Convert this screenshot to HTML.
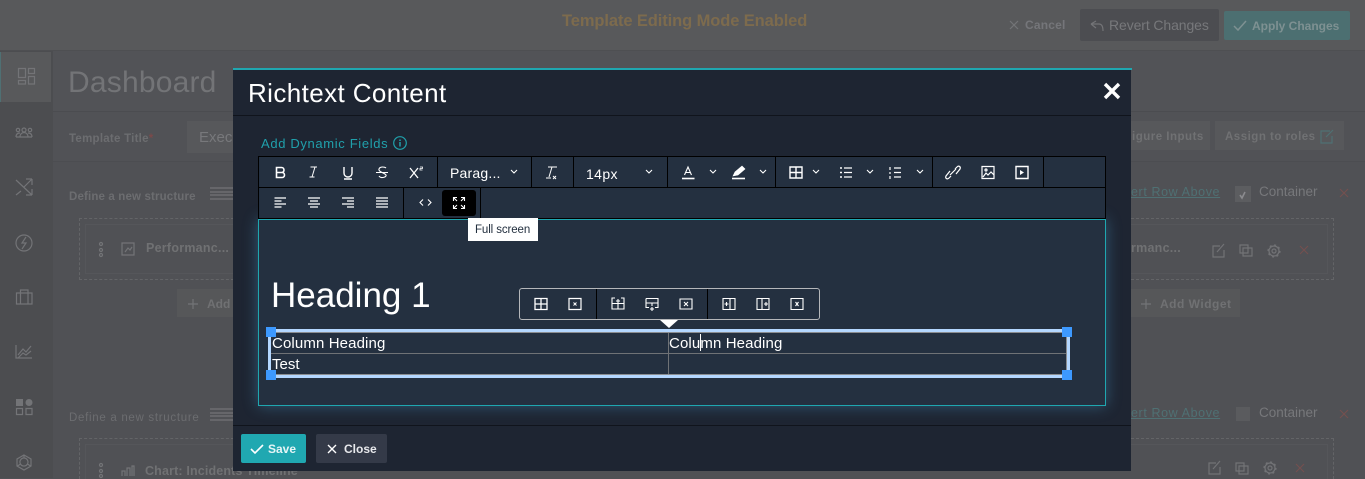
<!DOCTYPE html>
<html><head><meta charset="utf-8">
<style>
html,body{margin:0;padding:0;width:1365px;height:478px;overflow:hidden;background:#505155;font-family:"Liberation Sans",sans-serif}
.a{position:absolute}
.t{position:absolute;white-space:nowrap;line-height:1}
.bg{color:#707173;font-weight:bold;font-size:11.5px}
svg{position:absolute;left:0;top:0;overflow:visible}
</style></head><body>
<!-- dim page -->
<div class="a" style="left:0;top:0;width:1365px;height:50px;background:#58595b"></div>
<div class="a" style="left:0;top:50px;width:1365px;height:1px;background:#4e4f52"></div>
<div class="a" style="left:0;top:51px;width:53px;height:427px;background:#4c4d50"></div>
<div class="a" style="left:0;top:52px;width:50px;height:50px;background:#58595b;border-left:1px solid #4f7073"></div>
<div class="a" style="left:53px;top:51px;width:1312px;height:60px;background:#525357"></div>
<div class="a" style="left:53px;top:111px;width:1312px;height:1px;background:#4b4c50"></div>
<div class="a" style="left:53px;top:112px;width:1312px;height:50px;background:#515256"></div>
<div class="a" style="left:53px;top:161px;width:1312px;height:1px;background:#4c4d51"></div>
<div class="t" style="left:562px;top:13px;font-size:16.5px;font-weight:bold;color:#7d6b4d;letter-spacing:-.1px">Template Editing Mode Enabled</div>
<div class="t" style="left:1025px;top:19px;font-size:12px;font-weight:bold;color:#75767a;letter-spacing:.2px">Cancel</div>
<div class="a" style="left:1080px;top:9px;width:139px;height:32px;background:#4c4d51;border-radius:2px"></div>
<div class="t" style="left:1109px;top:18px;font-size:14px;color:#77787b;letter-spacing:-.1px">Revert Changes</div>
<div class="a" style="left:1224px;top:11px;width:126px;height:29px;background:#4c6f71;border-radius:2px"></div>
<div class="t" style="left:1252px;top:20px;font-size:12px;font-weight:bold;color:#7e9192">Apply Changes</div>
<div class="t" style="left:68px;top:68px;font-size:30px;color:#737477;letter-spacing:.2px">Dashboard</div>
<div class="t bg" style="left:69px;top:134px;color:#6c6d70;letter-spacing:.25px">Template Title<span style="color:#7a4a4a">*</span></div>
<div class="a" style="left:187px;top:121px;width:46px;height:32px;background:#57585b"></div>
<div class="t" style="left:199px;top:130px;font-size:15px;color:#77787b">Executive</div>
<div class="a" style="left:1131px;top:121px;width:79px;height:29px;background:#57585b"></div>
<div class="a" style="left:1215px;top:121px;width:129px;height:29px;background:#57585b"></div>
<div class="t bg" style="left:1132px;top:132px;letter-spacing:.5px">igure Inputs</div>
<div class="t bg" style="left:1225px;top:132px;letter-spacing:.5px">Assign to roles</div>
<div class="t bg" style="left:69px;top:192px;color:#6c6d70;letter-spacing:.15px">Define a new structure</div>
<div class="t bg" style="left:69px;top:413px;color:#6c6d70;font-weight:normal;letter-spacing:.7px">Define a new structure</div>
<div class="t" style="left:1131px;top:186px;font-size:12.5px;color:#4f7073;text-decoration:underline;letter-spacing:.6px">ert Row Above</div>
<div class="t" style="left:1131px;top:407px;font-size:12.5px;color:#4f7073;text-decoration:underline;letter-spacing:.6px">ert Row Above</div>
<div class="a" style="left:1235px;top:186px;width:16px;height:16px;background:#5c5d60"></div>
<div class="a" style="left:1236px;top:407px;width:14px;height:14px;background:#5a5b5e"></div>
<div class="t" style="left:1259px;top:185px;font-size:13.5px;color:#77787b">Container</div>
<div class="t" style="left:1259px;top:406px;font-size:13.5px;color:#77787b">Container</div>
<div class="a" style="left:79px;top:218px;width:154px;height:60px;border:1px dashed #636467;border-right:0"></div>
<div class="a" style="left:1131px;top:218px;width:202px;height:60px;border:1px dashed #636467;border-left:0"></div>
<div class="a" style="left:85px;top:224px;width:148px;height:48px;border:1px solid #55565a;border-right:0"></div>
<div class="a" style="left:1131px;top:224px;width:196px;height:48px;border:1px solid #55565a;border-left:0"></div>
<div class="a" style="left:79px;top:438px;width:154px;height:40px;border:1px dashed #636467;border-right:0;border-bottom:0"></div>
<div class="a" style="left:1131px;top:438px;width:202px;height:40px;border:1px dashed #636467;border-left:0;border-bottom:0"></div>
<div class="a" style="left:85px;top:444px;width:148px;height:34px;border:1px solid #55565a;border-right:0;border-bottom:0"></div>
<div class="a" style="left:1131px;top:444px;width:196px;height:34px;border:1px solid #55565a;border-left:0;border-bottom:0"></div>
<div class="t bg" style="left:146px;top:242px;font-size:12.5px;letter-spacing:.25px">Performanc...</div>
<div class="t bg" style="left:1131px;top:242px;font-size:12.5px;letter-spacing:.25px">rmanc...</div>
<div class="t" style="left:145px;top:465px;font-size:12.5px;font-weight:bold;color:#707173;letter-spacing:.15px">Chart: Incidents Timeline</div>
<div class="a" style="left:177px;top:289px;width:56px;height:28px;background:#565759"></div>
<div class="a" style="left:1131px;top:289px;width:109px;height:28px;background:#565759"></div>
<div class="t bg" style="left:207px;top:298px;font-size:12px">Add</div>
<div class="t bg" style="left:1160px;top:298px;font-size:12px;letter-spacing:.5px">Add Widget</div>

<svg width="1365" height="478" fill="none" stroke="#737477" stroke-width="1.2">
<!-- sidebar -->
<path d="M18.500 68.500h7v9h-7zM28.500 68.500h6v5h-6zM18.500 80.500h7v3.500h-7zM28.500 76.500h6v7.500h-6z"/>
<circle cx="24" cy="130" r="2"/><circle cx="30" cy="130" r="1.700"/><circle cx="18" cy="130" r="1.700"/><path d="M16 137c0-4 3-4 4-4M32 137c0-4-3-4-4-4M20 137c0-6 8-6 8 0M16 137h16"/>
<path d="M16 180l16 15M32 179v6M32 179h-6M32 179l-8 8M21 191l-5 4M32 195v-6M32 195h-6"/>
<circle cx="24" cy="243" r="8"/><path d="M26 237l-4 6h4l-4 6"/>
<path d="M16.500 293h15.500v11H16.500zM20.500 293v11M28 293v11M20.500 293v-3h7.500v3"/>
<path d="M16 345v13h16M18 355l5-6 3 3 5-6M18 358l5-5 3 2 5-4"/>
<path d="M16.500 408.500h6v6h-6zM26 408.500h6v6h-6z"/><rect x="16" y="399" width="7" height="7" fill="#737477" stroke="none"/><circle cx="29" cy="402.500" r="3.500" fill="#737477" stroke="none"/>
<path d="M24 455l7 4v7l-7 4-7-4v-7zM24 458a4 4 0 1 1-.1 0M24 455v3M17.500 466l3-2M30.500 466l-3-2"/>
<!-- lines -->
<path d="M210 188h23M210 192h23M210 195h23M210 199h23M210 409h23M210 413h23M210 416h23M210 420h23"/>
<circle cx="101" cy="244" r="1.500"/><circle cx="101" cy="250" r="1.500"/><circle cx="101" cy="255" r="1.500"/>
<circle cx="101" cy="465" r="1.500"/><circle cx="101" cy="471" r="1.500"/><circle cx="101" cy="476" r="1.500"/>
<path d="M122 243h12v12h-12zM125 252l3-4 2 2 2-3"/>
<path d="M122 476v-5h3v5M127 476v-8h3v8M132 476v-10h2v10"/>
<path d="M188 304h10M193 299v10"/><path d="M1141 304h10M1146 299v10"/>
<path d="M1010 21l8 8M1018 21l-8 8"/>
<path d="M1091 24h8c3 0 4 3 4 7M1091 24l5-3M1091 24l5 4"/>
<path d="M1234 26l4 4 8-9" stroke="#7e9192" stroke-width="1.500"/>
<path d="M1330 131h-9v12h11v-7M1333 130l-7 7" stroke="#4f7073"/>
<path d="M1240 195l2 3 3-6" stroke="#8a8b8e" stroke-width="1.600"/>
<path d="M1220 246h-7v11h11v-7M1217 252l7-8" stroke="#727376"/>
<path d="M1240 245h8v8h-8zM1243 248h9v8h-9z" stroke="#727376"/>
<circle cx="1274" cy="251" r="5" stroke="#727376"/><circle cx="1274" cy="251" r="6" stroke="#727376" stroke-dasharray="2 2.700"/><circle cx="1274" cy="251" r="2" stroke="#727376"/>
<path d="M1300 246l8 8M1308 246l-8 8" stroke="#74504f"/>
<path d="M1216 463h-7v11h11v-7M1213 469l7-8" stroke="#727376"/>
<path d="M1236 463h8v8h-8zM1239 466h9v8h-9z" stroke="#727376"/>
<circle cx="1270" cy="468" r="5" stroke="#727376"/><circle cx="1270" cy="468" r="6" stroke="#727376" stroke-dasharray="2 2.700"/><circle cx="1270" cy="468" r="2" stroke="#727376"/>
<path d="M1296 464l8 8M1304 464l-8 8" stroke="#74504f"/>
<path d="M1340 189l8 8M1348 189l-8 8M1340 410l8 8M1348 410l-8 8" stroke="#74504f"/>
</svg>

<!-- modal -->
<div class="a" style="left:233px;top:70px;width:898px;height:401px;background:#1e2532"></div>
<div class="a" style="left:233px;top:68px;width:899px;height:2px;background:#1fa7b0"></div>
<div class="a" style="left:233px;top:115px;width:898px;height:1px;background:#10141c"></div>
<div class="a" style="left:233px;top:425px;width:898px;height:1px;background:#10141c"></div>
<div class="t" style="left:248px;top:80px;font-size:26px;color:#fff;letter-spacing:.4px">Richtext Content</div>
<div class="t" style="left:261px;top:137px;font-size:13px;color:#20a0ab;letter-spacing:.65px">Add Dynamic Fields</div>
<!-- editor -->
<div class="a" style="left:258px;top:219px;width:846px;height:185px;background:#243040;border:1px solid #1fa7b0;box-shadow:0 0 14px rgba(80,170,220,.4)"></div>
<!-- toolbar -->
<div class="a" style="left:258px;top:156px;width:846px;height:61px;background:#243040;border:1px solid #000"></div>
<div class="a" style="left:258px;top:218px;width:848px;height:1px;background:#000"></div>
<div class="a" style="left:259px;top:187px;width:846px;height:1px;background:#000"></div>
<div class="a" style="left:437px;top:157px;width:1px;height:30px;background:#000"></div>
<div class="a" style="left:531px;top:157px;width:1px;height:30px;background:#000"></div>
<div class="a" style="left:573px;top:157px;width:1px;height:30px;background:#000"></div>
<div class="a" style="left:667px;top:157px;width:1px;height:30px;background:#000"></div>
<div class="a" style="left:775px;top:157px;width:1px;height:30px;background:#000"></div>
<div class="a" style="left:932px;top:157px;width:1px;height:30px;background:#000"></div>
<div class="a" style="left:1043px;top:157px;width:1px;height:30px;background:#000"></div>
<div class="a" style="left:403px;top:188px;width:1px;height:30px;background:#000"></div>
<div class="a" style="left:480px;top:188px;width:1px;height:30px;background:#000"></div>
<div class="a" style="left:442px;top:190px;width:34px;height:26px;background:#000;border-radius:3px"></div>
<div class="t" style="left:450px;top:166px;font-size:14px;color:#fff;letter-spacing:.2px">Parag...</div>
<div class="t" style="left:586px;top:167px;font-size:14px;color:#fff;letter-spacing:.4px">14px</div>
<div class="t" style="left:271px;top:278px;font-size:35px;color:#fff">Heading 1</div>
<!-- table -->
<div class="a" style="left:271px;top:332px;width:796px;height:1px;background:#8b8d90"></div>
<div class="a" style="left:271px;top:353px;width:796px;height:1px;background:#6f7276"></div>
<div class="a" style="left:271px;top:374px;width:796px;height:1px;background:#8b8d90"></div>
<div class="a" style="left:668px;top:333px;width:1px;height:41px;background:#6f7276"></div>
<div class="a" style="left:268px;top:329px;width:802px;height:3px;background:#b4d7ff"></div>
<div class="a" style="left:268px;top:375px;width:802px;height:3px;background:#b4d7ff"></div>
<div class="a" style="left:268px;top:329px;width:3px;height:49px;background:#b4d7ff"></div>
<div class="a" style="left:1066px;top:332px;width:1px;height:43px;background:#8b8d90"></div>
<div class="a" style="left:1067px;top:329px;width:3px;height:49px;background:#b4d7ff"></div>
<div class="a" style="left:266px;top:327px;width:10px;height:10px;background:#3d99ff"></div>
<div class="a" style="left:1062px;top:327px;width:10px;height:10px;background:#3d99ff"></div>
<div class="a" style="left:266px;top:370px;width:10px;height:10px;background:#3d99ff"></div>
<div class="a" style="left:1062px;top:370px;width:10px;height:10px;background:#3d99ff"></div>
<div class="t" style="left:272px;top:336px;font-size:15px;color:#fff;letter-spacing:.12px">Column Heading</div>
<div class="t" style="left:669px;top:336px;font-size:15px;color:#fff;letter-spacing:.12px">Column Heading</div>
<div class="t" style="left:272px;top:357px;font-size:15px;color:#fff">Test</div>
<div class="a" style="left:700px;top:334px;width:1px;height:17px;background:#fff"></div>
<!-- table toolbar -->
<div class="a" style="left:519px;top:288px;width:299px;height:30px;background:#243040;border:1px solid #b5b7ba;border-radius:3px"></div>
<div class="a" style="left:596px;top:289px;width:1px;height:30px;background:#000"></div>
<div class="a" style="left:707px;top:289px;width:1px;height:30px;background:#000"></div>
<div class="a" style="left:660px;top:320px;width:0;height:0;border-left:9px solid transparent;border-right:9px solid transparent;border-top:8px solid #fff"></div>
<!-- tooltip -->
<div class="a" style="left:468px;top:218px;width:70px;height:23px;background:#fff"></div>
<div class="t" style="left:475px;top:225px;font-size:11.5px;color:#222f3e;letter-spacing:-.1px">Full screen</div>
<!-- footer -->
<div class="a" style="left:241px;top:434px;width:65px;height:29px;background:#20a8b1;border-radius:2px"></div>
<div class="t" style="left:268px;top:443px;font-size:12px;font-weight:bold;color:#e6f5f6">Save</div>
<div class="a" style="left:316px;top:434px;width:71px;height:29px;background:#343a48;border-radius:2px"></div>
<div class="t" style="left:344px;top:443px;font-size:12px;font-weight:bold;color:#e8e9ec">Close</div>

<svg width="1365" height="478" fill="none" stroke="#fff" stroke-width="1.2">
<!-- modal close -->
<path d="M1105 84l14 14M1119 84l-14 14" stroke-width="3.400"/>
<circle cx="400" cy="143" r="6.300" stroke="#20a0ab"/><path d="M400 142v4.500M400 139.500v1.500" stroke="#20a0ab" stroke-width="1.500"/>
<!-- save/close icons -->
<path d="M251 449l4 4 8-8" stroke-width="1.600"/>
<path d="M328 445l8 8M336 445l-8 8" stroke-width="1.400"/>
<!-- row 1 -->
<path d="M276.500 167.500h5a2.500 2.500 0 0 1 0 5h-5zM276.500 172.500h5.500a2.500 2.500 0 0 1 0 5h-5.500z" stroke-width="1.600"/>
<path d="M312 177l3-10M310.500 167h6.500M309.500 177h5" stroke-width="1"/>
<path d="M344 167v6a4 4 0 0 0 8 0v-6M344 179h8" stroke-width="1.400"/>
<path d="M376 172.500h12M386 168c-1-1-6-2-7 1s6 4 7 6-5 4-7 1" stroke-width="1.100"/>
<path d="M410 168l8 10M418 168l-8 10" stroke-width="1.300"/><path d="M420 167h2.500v1.500h-2.500v1.500h2.500" stroke-width=".8"/>
<path d="M548 167h9M552 167l-3 10M546 178h5M553 176l3 3M556 176l-3 3" stroke-width="1"/>
<path d="M682 178.500h12.500" stroke-width="1.600"/><path d="M684.500 175l3.500-8 3.500 8M685.500 172.500h5" stroke-width="1.100"/>
<path d="M732 178.500h13" stroke-width="1.600"/><path d="M733 176l2-4 7-6 3 3-7 6z" fill="#fff" stroke-width=".6"/>
<path d="M790 167h12v11h-12zM790 172.500h12M796 167v11" stroke-width="1.400"/>
<path d="M840 168h2M840 172.500h2M840 177h2" stroke-width="1.600"/><path d="M844 168h8M844 172.500h8M844 177h8" stroke-width="1.200"/>
<path d="M890 167v3M890 172v2M890 176v3" stroke-width="1.200"/><path d="M894 168h7M894 172.500h7M894 177h7" stroke-width="1.300"/>
<path d="M951 176l-2 2c-2 2-4 0-3-2l4-5M955 169l2-2c2-2 4 0 3 2l-4 5M950 175l6-6" stroke-width="1.200"/>
<path d="M982 166.500h12v12h-12zM983 177l3-4 2 2 3-3 3 3" stroke-width="1.200"/><circle cx="986" cy="170" r="1"/>
<path d="M1016 166.500h12v12h-12z" stroke-width="1.400"/><path d="M1020 170v5l4-2.500z" fill="#fff" stroke="none"/>
<!-- chevrons -->
<path d="M511 170l3 3 3-3M646 170l3 3 3-3M710 170l3 3 3-3M760 170l3 3 3-3M813 170l3 3 3-3M867 170l3 3 3-3M917 170l3 3 3-3" stroke-width="1.100"/>
<!-- row 2 -->
<path d="M274.500 198h11.500M274.500 201h7M274.500 204h11.500M274.500 207h7" stroke-width="1.200"/>
<path d="M308 198h12M310 201h8M308 204h12M310 207h8" stroke-width="1.200"/>
<path d="M342 198h12M347 201h7M342 204h12M347 207h7" stroke-width="1.200"/>
<path d="M376 198h12M376 201h12M376 204h12M376 207h12" stroke-width="1.200"/>
<path d="M423 200l-3 3 3 3M428 200l3 3-3 3" stroke-width="1.100" transform="translate(0 -.5)"/>
<path d="M453.500 201v-3.500h3.500M453.500 197.500l3.500 3.500M464.500 201v-3.500h-3.500M464.500 197.500l-3.500 3.500M453.500 205v3.500h3.500M453.500 208.500l3.500-3.500M464.500 205v3.500h-3.500M464.500 208.500l-3.500-3.500" stroke-width="1.100"/>
<!-- table toolbar icons -->
<path d="M535 298.500h12v11h-12zM535 304h12M541 298.500v11" stroke-width="1.300"/>
<path d="M569 298.500h12v11h-12z" stroke-width="1.200"/><path d="M573.500 302.500l3 3M576.500 302.500l-3 3" stroke-width="1"/>
<path d="M612 300v-2h3M621 298h3v2M612 300v9h12v-9M612 303.500h12M618 299v4M616 301h4M618 304v5" stroke-width="1.100"/>
<path d="M646 298.500h12v9h-3M649 307.500h-3v-9M646 303h12M652 303v3M650 309h4M652 307v4" stroke-width="1.100"/>
<path d="M680 299h12v10h-12zM684 302l4 4M688 302l-4 4" stroke-width="1.100"/>
<path d="M723 298.500h12v11h-12zM730 298.500v11M724.500 304h4M726.500 302v4" stroke-width="1.100"/>
<path d="M757 298.500h12v11h-12zM762 298.500v11M764 304h4M766 302v4" stroke-width="1.100"/>
<path d="M791 298.500h12v11h-12zM795.500 302l3 4M798.500 302l-3 4" stroke-width="1.100"/>
</svg>
</body></html>
